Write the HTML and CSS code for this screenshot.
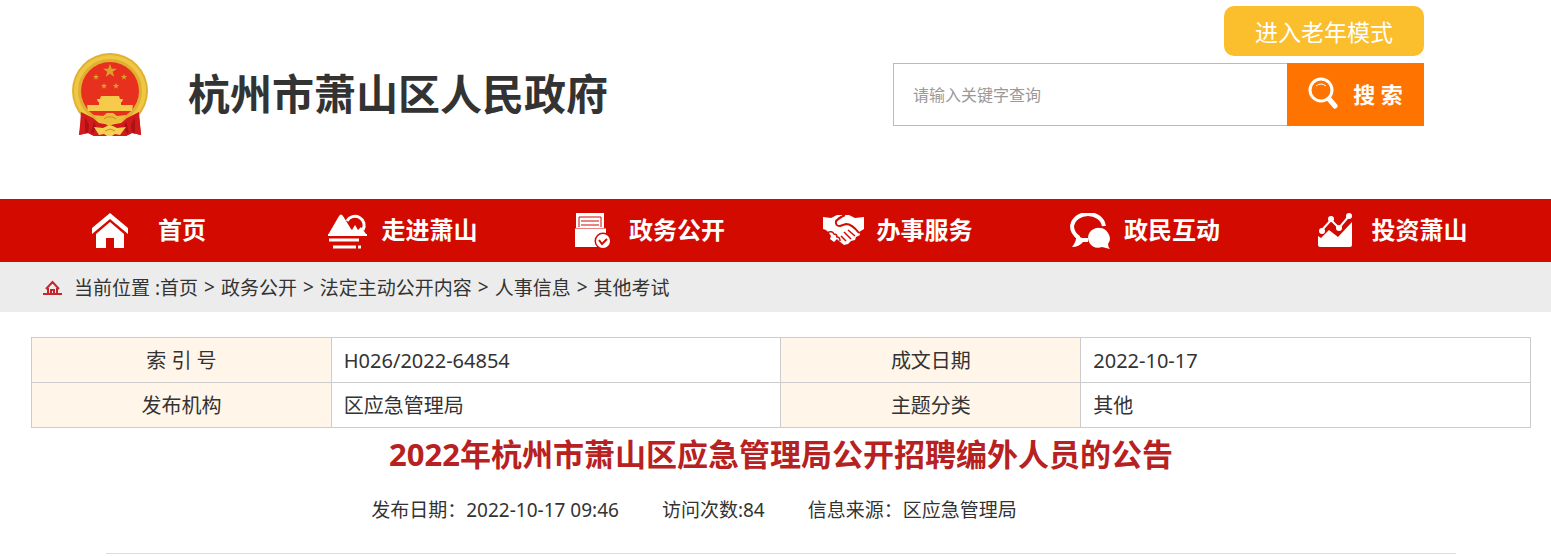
FILE: index.html
```html
<!DOCTYPE html>
<html lang="zh-CN">
<head>
    <meta charset="UTF-8">
    <meta name="viewport" content="width=device-width, initial-scale=1.0">
    <title>2022年杭州市萧山区应急管理局公开招聘编外人员的公告</title>
    <link rel="stylesheet" href="styles.css">
</head>
<body>
    <header class="header">
        <a class="logo" href="#">
            <svg class="emblem" viewBox="0 0 76 83" aria-hidden="true">
                <defs>
                    <path id="star" d="M0-10 2.3-3.1 9.5-3.1 3.7 1.2 5.9 8.1 0 3.9-5.9 8.1-3.7 1.2-9.5-3.1-2.3-3.1z"/>
                </defs>
                <path fill="#d2191c" d="M10 56h56l2 15 1 11-9-2-6 3H22l-6-3-9 2 2-11z"/>
                <circle cx="38" cy="38" r="38" fill="#e0b032"/>
                <circle cx="38" cy="38" r="34" fill="none" stroke="#efc743" stroke-width="4"/>
                <circle cx="38" cy="38" r="29" fill="#e8301f"/>
                <g fill="#d9a42c">
                    <use href="#star" transform="translate(38 18) scale(.72)"/>
                    <use href="#star" transform="translate(24 24) scale(.33)"/>
                    <use href="#star" transform="translate(52 24) scale(.33)"/>
                    <use href="#star" transform="translate(32 33) scale(.33)"/>
                    <use href="#star" transform="translate(44 33) scale(.33)"/>
                </g>
                <path fill="#f6cb4b" d="M29 43h18l1 3h3l-1 3h-1v3h12l-1 6H16l-1-6h12v-3h-1l-1-3h3z"/>
                <path fill="#d2191c" d="M9 59l12 6 6 5 11 2 11-2 6-5 12-6 1 13 1 10-9-2-6 3H22l-6-3-9 2 1-10z"/>
                <path fill="#ab1216" d="M13 64l4 8-1 8-3-1zM63 64l-4 8 1 8 3-1zM22 68l2 6-3 7-2-1zM54 68l-2 6 3 7 2-1z"/>
                <path fill="#eebd3c" d="M22 62l9 1 4-3h6l4 3 9-1-5 7-7 1-3 3h-3l-3-3-7-1z"/>
                <path fill="#f5d052" d="M22 74l9 1 4-2h6l4 2 9-1-6 8-5-1-3 2h-5l-3-2-5 1z"/>
                <path fill="none" stroke="#c78d20" d="M32 66l3-2h6l3 2M33 78l5-2 5 2"/>
            </svg>
            <span class="logo-text">杭州市萧山区人民政府</span>
        </a>
        <div class="header-tools">
            <button class="elder-mode" type="button">进入老年模式</button>
            <form class="search">
                <input class="search-input" type="text" placeholder="请输入关键字查询" aria-label="请输入关键字查询">
                <button class="search-button" type="button">
                    <svg class="search-icon" viewBox="0 0 30 32" aria-hidden="true">
                        <circle cx="13" cy="13" r="11" fill="none" stroke="#fff" stroke-width="3"/>
                        <path d="M8 9q5-4 10 0" fill="none" stroke="#fff"/>
                        <path d="M21 22l6 7" stroke="#fff" stroke-width="5" stroke-linecap="round"/>
                    </svg>
                    <span>搜 索</span>
                </button>
            </form>
        </div>
    </header>

    <nav class="nav">
        <a class="nav-item" href="#">
            <svg class="nav-icon" viewBox="0 0 54 36" aria-hidden="true">
                <path fill="#fff" d="M30 0L12 15v6L30 6l18 15v-6z"/>
                <path fill="#fff" d="M30 9L16 21v14h10V25h8v10h10V21z"/>
            </svg>
            <span class="nav-label">首页</span>
        </a>
        <a class="nav-item" href="#">
            <svg class="nav-icon" viewBox="0 0 54 36" aria-hidden="true">
                <path fill="none" stroke="#fff" stroke-width="3" d="M19 8a9 9 0 1 1 16 9"/>
                <path fill="#fff" d="M0 22L11 3q2-3 4 0l8 13 1 1 3-5 3 5 3-3 5 7v1z"/>
                <path stroke="#fff" stroke-width="3" d="M1 27h30M5 34h23M30 34h3"/>
                <path stroke="#fff" stroke-width="2" d="M0 22h39"/>
            </svg>
            <span class="nav-label">走进萧山</span>
        </a>
        <a class="nav-item" href="#">
            <svg class="nav-icon" viewBox="0 0 54 36" aria-hidden="true">
                <path fill="#fff" d="M1 0h28v15h2v19H0V15h1z"/>
                <path fill="none" stroke="#d30a00" d="M4 14V4h22v10M6 8h18M6 12h18"/>
                <path stroke="#e8837f" d="M0 15.500h31"/>
                <circle cx="28" cy="28" r="8.500" fill="#d30a00"/>
                <circle cx="28" cy="28" r="7" fill="#fff"/>
                <path fill="none" stroke="#d30a00" stroke-width="2" d="M24 27l3 4 5-5"/>
            </svg>
            <span class="nav-label">政务公开</span>
        </a>
        <a class="nav-item" href="#">
            <svg class="nav-icon" viewBox="0 0 54 36" aria-hidden="true">
                <path fill="#fff" d="M0 4l8 1 6-3h12l6 3 9-1v12l-5 3 1 3-4 2-1 3-4 1-3 3-4 1-5-4-2-2-3 3-4-3 1-3-2-3-3-3-3-1z"/>
                <path fill="none" stroke="#d30a00" stroke-width="2" d="M22 2q-5 2-9 6-1 5 4 5l6-2q6 0 13 9"/>
                <path fill="none" stroke="#d30a00" stroke-width="1.500" d="M4 20q5-3 7 1 3 0 3 3 3 0 3 4M25 17l7 6M21 19l7 7M18 23l5 5"/>
            </svg>
            <span class="nav-label">办事服务</span>
        </a>
        <a class="nav-item" href="#">
            <svg class="nav-icon" viewBox="0 0 54 36" aria-hidden="true">
                <path fill="none" stroke="#fff" stroke-width="4" d="M34 13C31-3 5-3 2 13q0 7 7 12"/>
                <path fill="#fff" d="M6 22q1 6-4 12 7 0 11-5h5v-4h-6z"/>
                <path fill="#fff" d="M30 15a10 10 0 1 0 2 19q4 1 8 2-2-2-2-5 4-5 0-11-3-5-8-5z"/>
            </svg>
            <span class="nav-label">政民互动</span>
        </a>
        <a class="nav-item" href="#">
            <svg class="nav-icon" viewBox="0 0 54 36" aria-hidden="true">
                <path fill="#fff" d="M0 23l3 2 8-8 9 7 14-15v23q0 2-2 2H2q-2 0-2-2z"/>
                <path fill="none" stroke="#fff" stroke-width="2" d="M4 17l9-10 8 8L31 3"/>
                <g fill="#fff">
                    <circle cx="4" cy="18" r="3"/>
                    <circle cx="13" cy="6" r="3"/>
                    <circle cx="21" cy="15" r="3"/>
                    <circle cx="31" cy="3" r="3"/>
                </g>
            </svg>
            <span class="nav-label">投资萧山</span>
        </a>
    </nav>

    <div class="breadcrumb">
        <svg class="breadcrumb-icon" viewBox="0 0 19 16" aria-hidden="true">
            <path fill="none" stroke="#c5282c" stroke-width="2" d="M3 10l6.500-7L16 10M5 9v6M14 9v6M8 15v-4h3v4"/>
            <path stroke="#c5282c" stroke-width="2" d="M0 15h19"/>
        </svg>
        <span>当前位置 :</span>
        <a href="#">首页</a>
        <span class="separator">&gt;</span>
        <a href="#">政务公开</a>
        <span class="separator">&gt;</span>
        <a href="#">法定主动公开内容</a>
        <span class="separator">&gt;</span>
        <a href="#">人事信息</a>
        <span class="separator">&gt;</span>
        <a href="#">其他考试</a>
    </div>

    <main class="content">
        <table class="info">
            <tr>
                <th scope="row">索 引 号</th>
                <td>H026/2022-64854</td>
                <th scope="row">成文日期</th>
                <td>2022-10-17</td>
            </tr>
            <tr>
                <th scope="row">发布机构</th>
                <td>区应急管理局</td>
                <th scope="row">主题分类</th>
                <td>其他</td>
            </tr>
        </table>
        <h1 class="title">2022年杭州市萧山区应急管理局公开招聘编外人员的公告</h1>
        <div class="meta">
            <span>发布日期：2022-10-17 09:46</span>
            <span>访问次数:84</span>
            <span>信息来源：区应急管理局</span>
        </div>
    </main>
</body>
</html>
```
FILE: styles.css
```css
* {
    box-sizing: border-box;
}
body {
    margin: 0;
    background: #fff;
    color: #333;
    font-family: "Noto Sans", "Noto Sans CJK SC", sans-serif;
    font-size: 19px;
}
a {
    color: inherit;
    text-decoration: none;
}
button,
input {
    font-family: inherit;
}

/* header */
.header {
    display: flex;
    justify-content: space-between;
    align-items: flex-start;
    padding: 6px 127px 63px 72px;
}
.logo {
    display: flex;
    align-items: flex-start;
    gap: 40px;
    padding-top: 47px;
}
.emblem {
    width: 76px;
    height: 83px;
}
.logo-text {
    font-family: "Noto Sans CJK SC", sans-serif;
    font-size: 42px;
    font-weight: bold;
    line-height: 78px;
}
.header-tools {
    display: flex;
    flex-direction: column;
    align-items: flex-end;
    gap: 7px;
    width: 531px;
}
.elder-mode {
    width: 200px;
    height: 50px;
    padding: 0;
    border: none;
    border-radius: 10px;
    background: #fbbe2d;
    color: #fff;
    font-size: 23px;
    cursor: pointer;
}
.search {
    display: flex;
    width: 100%;
    height: 63px;
}
.search-input {
    flex: 1;
    min-width: 0;
    padding: 0 19px;
    border: 1px solid #bbb;
    border-right: none;
    font-size: 16px;
}
.search-input::placeholder {
    color: #999;
}
.search-button {
    display: flex;
    justify-content: center;
    align-items: center;
    gap: 15px;
    width: 137px;
    padding: 0 0 4px;
    border: none;
    background: #ff7300;
    color: #fff;
    font-size: 22px;
    font-weight: bold;
    cursor: pointer;
}
.search-icon {
    width: 30px;
    height: 32px;
}

/* navigation */
.nav {
    display: flex;
    padding: 0 33px;
    background: #d30a00;
}
.nav-item {
    display: flex;
    flex: 1;
    align-items: center;
    height: 63px;
    padding-left: 47px;
    color: #fff;
    font-size: 24px;
    font-weight: bold;
}
.nav-icon {
    width: 54px;
    height: 36px;
}
.nav-label {
    width: 96px;
    line-height: 32px;
    padding-bottom: 2px;
    text-align: center;
}

/* current position */
.breadcrumb {
    display: flex;
    align-items: center;
    height: 50px;
    padding-left: 43px;
    background: #ececec;
}
.breadcrumb-icon {
    width: 19px;
    height: 16px;
    margin-right: 12px;
}
.separator {
    margin: 0 6px;
}

/* article */
.content {
    padding: 25px 20px 0 31px;
}
.info {
    width: 100%;
    border-collapse: collapse;
    table-layout: fixed;
    font-size: 20px;
}
.info th,
.info td {
    height: 45px;
    padding: 2px 12px 0;
    border: 1px solid #ccc;
    line-height: 30px;
}
.info th {
    width: 20%;
    background: #fff5e9;
    font-weight: normal;
    text-align: center;
}
.info td {
    width: 30%;
}
.title {
    margin: 0;
    color: #b82121;
    font-size: 31px;
    line-height: 52px;
    text-align: center;
}
.meta {
    display: flex;
    justify-content: center;
    gap: 43px;
    margin: 0 75px;
    padding: 15px 174px 28px 0;
    border-bottom: 1px solid #ddd;
    line-height: 30px;
}
```
